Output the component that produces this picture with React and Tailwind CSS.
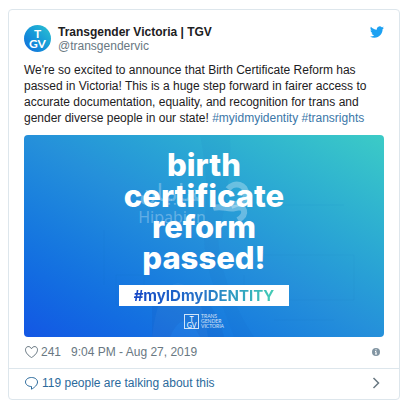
const TWITTER_PATH =
  "M23.95 4.57a10 10 0 0 1-2.82.77 4.96 4.96 0 0 0 2.16-2.72c-.95.55-2 .95-3.13 1.18a4.92 4.92 0 0 0-8.38 4.48C7.69 8.09 4.07 6.13 1.64 3.16a4.92 4.92 0 0 0 1.52 6.57 4.9 4.9 0 0 1-2.23-.61v.06c0 2.39 1.7 4.38 3.95 4.83a5 5 0 0 1-2.21.08 4.94 4.94 0 0 0 4.6 3.42A9.87 9.87 0 0 1 0 19.54a13.99 13.99 0 0 0 7.55 2.21c9.05 0 14-7.5 14-13.98 0-.21 0-.42-.02-.63a9.94 9.94 0 0 0 2.46-2.55z"

// Faint mark and name printed behind the heading
function Watermark() {
  return (
    <div className="absolute inset-x-0 top-11 flex justify-center gap-1 pr-4 text-white/30">
      <div className="flex flex-col items-center">
        <span className="font-['DejaVu_Sans',sans-serif] text-2xl leading-7">هنابيان</span>
        <span className="font-['Noto_Sans',sans-serif] text-base leading-5">Hipabian</span>
      </div>
      <svg width="44" height="44" viewBox="0 0 44 44" fill="none" stroke="currentColor" strokeWidth="6">
        <path d="M18 10C24 2 37 5 36 16C35 25 27 24 21 27" />
        <path d="M3 29C12 26 18 31 25 29C35 26 38 35 28 41" />
      </svg>
    </div>
  )
}

function Artwork() {
  return (
    <a
      href="#photo"
      className="relative mt-[9px] flex aspect-[360/202] flex-col items-center overflow-hidden rounded-sm bg-linear-to-tr from-[#1456e4] via-[#2590da] to-[#3ccbc6] text-white"
    >
      <svg className="absolute inset-0 size-full" viewBox="0 0 360 202" fill="none">
        <path d="M128 202Q134 150 154 148Q178 152 184 202Z" fill="#ffffff" opacity="0.04" />
        <path d="M128 202V168Q155 140 178 160Q196 180 200 202H176Q160 170 146 202Z" fill="#1646b0" opacity="0.12" />
        <path d="M176 0Q186 48 180 90Q178 130 198 170L210 202H230Q196 150 194 100Q208 50 206 0Z" fill="#1446b0" opacity="0.05" />
        <path d="M228 70H320M240 120H330V165H220V140M250 185H310M80 95V150M92 140H120V170H92Z" stroke="#1446b0" opacity="0.05" />
      </svg>
      <Watermark />
      <p className="relative pt-3.5 text-center font-['Inter',sans-serif] text-[31px] leading-[31px] font-extrabold">
        birth
        <br />
        certificate
        <br />
        reform
        <br />
        passed!
      </p>
      <p className="relative mt-3 bg-white px-[15px] font-['Inter',sans-serif] text-[15px] leading-[21px] font-bold">
        <span className="bg-linear-to-r from-[#1746c6] via-[#2874c8] to-[#45cdb4] bg-clip-text text-transparent">
          #myIDmyIDENTITY
        </span>
      </p>
      <div className="relative mt-2 flex items-center gap-0.5 font-['Lato',sans-serif]">
        <span className="flex size-[15px] flex-col items-center justify-center border border-white/80 text-[7px] leading-[6px]">
          <span>T</span>
          <span>GV</span>
        </span>
        <span className="flex flex-col text-[5px] leading-[5px] text-white/80">
          <span>TRANS</span>
          <span>GENDER</span>
          <span>VICTORIA</span>
        </span>
      </div>
    </a>
  )
}

export default function App() {
  return (
    <div className="min-h-screen bg-white pt-[9px] pr-[11px] pb-2 pl-2 font-['Liberation_Sans',Arial,sans-serif] text-xs leading-4 text-[#1c2022]">
      <article className="rounded border border-[#dde6ec]">
        <div className="px-[15px] pt-[15px] pb-2">

          {/* Author */}
          <header className="flex items-start">
            <a
              href="#profile"
              aria-label="Transgender Victoria"
              className="flex size-[27px] flex-col items-center justify-center rounded-full bg-linear-to-tr from-[#1868dc] to-[#2ec4d0] font-['Lato',sans-serif] text-xs leading-[10px] font-bold text-white"
            >
              <span>T</span>
              <span>GV</span>
            </a>
            <a href="#profile" className="ml-[7px] flex flex-1 flex-col leading-[14px]">
              <span className="font-bold">Transgender Victoria | TGV</span>
              <span className="text-[#697882]">@transgendervic</span>
            </a>
            <a href="#tweet" aria-label="View on Twitter" className="text-[#1da1f2]">
              <svg width="14" height="14" viewBox="0 0 24 24" fill="currentColor">
                <path d={TWITTER_PATH} />
              </svg>
            </a>
          </header>

          {/* Message */}
          <p className="mt-[9px]">
            We're so excited to announce that Birth Certificate Reform has passed in Victoria! This is
            a huge step forward in fairer access to accurate documentation, equality, and recognition
            for trans and gender diverse people in our state!{" "}
            <a href="#myidmyidentity" className="text-[#3b77a8]">#myidmyidentity</a>{" "}
            <a href="#transrights" className="text-[#3b77a8]">#transrights</a>
          </p>

          <Artwork />

          {/* Likes and date */}
          <div className="mt-[7px] flex items-center text-[#697882]">
            <button type="button" className="flex items-center gap-0.5">
              <svg width="15" height="14" viewBox="0 0 15 14" fill="none" stroke="currentColor">
                <path d="M7.5 12.5C4 10.5 1.5 7.5 1.5 4.8C1.5 1 6 .4 7.5 3.8C9 .4 13.5 1 13.5 4.8C13.5 7.5 11 10.5 7.5 12.5Z" />
              </svg>
              241
            </button>
            <a href="#tweet" className="ml-2.5 flex-1">9:04 PM - Aug 27, 2019</a>
            <a href="#info" aria-label="Twitter Ads info and privacy" className="pr-1">
              <svg width="8" height="8" viewBox="0 0 8 8">
                <circle cx="4" cy="4" r="4" fill="#8295a2" />
                <path d="M4 1.200V2.400M3 3.500H4V6M3 6H5" fill="none" stroke="#ffffff" />
              </svg>
            </a>
          </div>
        </div>

        {/* Conversation */}
        <a href="#replies" className="flex items-center border-t border-[#dde6ec] px-[15px] pt-1.5 pb-2 text-[#2b6a9c]">
          <svg width="15" height="14" viewBox="0 0 15 14" fill="none" stroke="currentColor">
            <path d="M7.500 10.500C4 10.500 1.500 8.500 1.500 6C1.500 3.500 4 1.500 7.500 1.500S13.500 3.500 13.500 6C13.500 9 10.500 11.500 7.500 13.200Z" />
          </svg>
          <span className="ml-[3px] flex-1">119 people are talking about this</span>
          <svg width="8" height="12" viewBox="0 0 8 12" className="mr-1" fill="none" stroke="#697882" strokeWidth="1.5">
            <path d="M1.500 1L6.500 6L1.500 11" />
          </svg>
        </a>
      </article>
    </div>
  )
}
